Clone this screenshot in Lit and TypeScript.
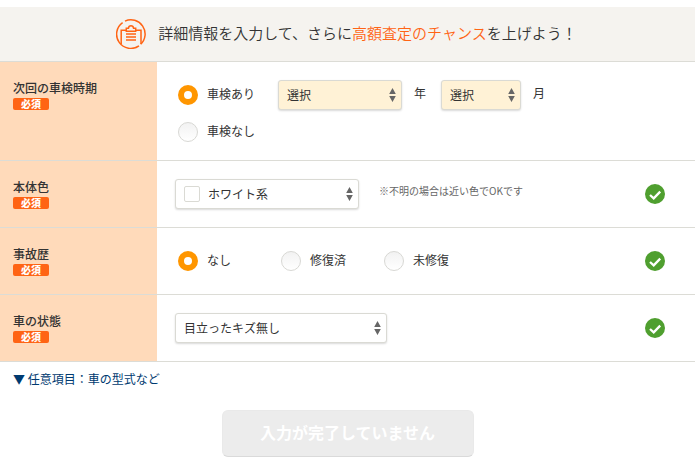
import { LitElement, html, css, nothing, type TemplateResult } from "lit";
import { customElement, property } from "lit/decorators.js";

const arrows = html`<svg class="arrows" viewBox="0 0 7 14" width="7" height="14" aria-hidden="true">
  <path d="M3.5 0L6.8 6H.2z M3.5 14L.2 8H6.8z" fill="#666" />
</svg>`;

const checkMark = html`<svg class="done" viewBox="0 0 20 20" width="20" height="20" role="img" aria-label="OK">
  <circle cx="10" cy="10" r="10" fill="#4f9f2f" />
  <path d="M5 11L8.7 14.4L15.2 7.6" fill="none" stroke="#fff" stroke-width="2.3" />
</svg>`;

const clipboard = html`<svg class="clipboard" viewBox="0 0 30 30" width="30" height="30" aria-hidden="true">
  <g fill="none" stroke="#ff6414" stroke-width="1.5">
    <path d="M9 2.1A14.2 14.2 0 0 1 24.7 25.3" />
    <path d="M23 26.8A14.2 14.2 0 0 1 6.6 3.6" />
    <path d="M10 11.2H5.2V25M20 11.2H25V25" />
    <path d="M10.3 12.2V9.3H12.4C12.8 5.9 17.2 5.9 17.6 9.3H19.7V12.2Z" />
    <path d="M10 15H20M10 18H20M10 21H20" />
  </g>
</svg>`;

@customElement("form-row")
class FormRow extends LitElement {
  @property() heading = "";
  @property({ type: Boolean }) complete = false;

  static styles = css`
    :host {
      display: flex;
      border-bottom: 1px solid #dcdcd6;
    }
    .head {
      box-sizing: border-box;
      flex: none;
      width: 157px;
      padding: 17px 13px 0;
      background: #ffdaba;
      font-weight: 500;
      line-height: 18px;
    }
    .must {
      display: block;
      width: 36px;
      height: 12px;
      margin-top: 1px;
      border-radius: 2px;
      background: #ff6414;
      color: #fff;
      font-size: 10px;
      font-weight: 900;
      line-height: 12px;
      text-align: center;
    }
    .body {
      flex: 1;
      display: flex;
      align-items: center;
      min-height: 30px;
      padding: 18px 30px 18px 18px;
    }
    .fields {
      flex: 1;
    }
    .done {
      flex: none;
    }
  `;

  render() {
    return html`
      <div class="head">${this.heading}<span class="must">必須</span></div>
      <div class="body">
        <div class="fields"><slot></slot></div>
        ${this.complete ? checkMark : nothing}
      </div>
    `;
  }
}

@customElement("app-root")
class AppRoot extends LitElement {
  static styles = css`
    :host {
      display: block;
      padding-top: 7px;
      background: #fff;
      color: #333;
      font-family: "Noto Sans CJK JP", sans-serif;
      font-size: 12px;
      line-height: 18px;
    }
    .banner {
      display: flex;
      align-items: center;
      justify-content: center;
      gap: 12px;
      height: 54px;
      margin: 0;
      padding-right: 2px;
      border-bottom: 1px solid #dcdcd6;
      background: #f5f3ef;
      font-size: 15px;
      font-weight: 350;
      line-height: 22px;
    }
    .banner span {
      padding-bottom: 2px;
    }
    .banner em {
      color: #ff6414;
      font-style: normal;
    }
    .clipboard {
      flex: none;
    }
    .line {
      display: flex;
      align-items: center;
      min-height: 30px;
    }
    .line + .line {
      margin-top: 8px;
      min-height: 24px;
      align-items: flex-end;
    }
    .choice {
      display: flex;
      align-items: center;
      gap: 9px;
      width: 100px;
      padding-left: 3px;
    }
    .choice input {
      appearance: none;
      box-sizing: border-box;
      width: 20px;
      height: 20px;
      margin: 0;
      border: 1px solid #d8d8d4;
      border-radius: 50%;
      background: linear-gradient(#f2f2f2, #fff);
    }
    .choice input:checked {
      border: 6px solid #ff9600;
      background: #fff;
    }
    .choice span {
      padding-bottom: 2px;
    }
    .pick {
      position: relative;
      display: flex;
      align-items: center;
    }
    .pick select {
      appearance: none;
      box-sizing: border-box;
      width: 100%;
      height: 30px;
      padding: 0 20px 1px 8px;
      border: 1px solid #dadad4;
      border-radius: 3px;
      background: #fff;
      box-shadow: 0 1px 2px rgba(0, 0, 0, 0.15);
      color: inherit;
      font: inherit;
    }
    .pick.todo select {
      background: #fff2d6;
    }
    .pick .arrows {
      position: absolute;
      right: 6px;
      pointer-events: none;
    }
    .swatch {
      position: absolute;
      left: 9px;
      box-sizing: border-box;
      width: 16px;
      height: 16px;
      border: 1px solid #dadad4;
      border-radius: 2px;
      background: #fff;
      pointer-events: none;
    }
    .year {
      width: 124px;
    }
    .month {
      width: 80px;
    }
    .colour {
      width: 184px;
    }
    .pick.colour select {
      padding-left: 32px;
    }
    .state {
      width: 212px;
    }
    .unit {
      width: 12px;
      margin: 0 15px 0 12px;
      padding-bottom: 4px;
    }
    .note {
      margin-left: 20px;
      padding-bottom: 6px;
      color: #666;
      font-size: 10px;
    }
    .more {
      display: block;
      margin: 8px 13px 22px;
      color: #003a70;
      text-decoration: none;
    }
    .submit {
      display: block;
      width: 252px;
      height: 47px;
      margin: 0 auto;
      padding: 0 0 4px;
      border: 1px solid #e9e9e9;
      border-bottom-color: #dadada;
      border-radius: 6px;
      background: #ececec;
      color: #fff;
      font: 700 16px/24px "Noto Sans CJK JP", sans-serif;
    }
  `;

  private choice(name: string, text: string, checked = false): TemplateResult {
    return html`<label class="choice"
      ><input type="radio" name=${name} .checked=${checked} /><span>${text}</span></label
    >`;
  }

  private pick(kind: string, label: string, option: string, before: unknown = nothing): TemplateResult {
    return html`<div class="pick ${kind}">
      <select aria-label=${label}><option>${option}</option></select>${before}${arrows}
    </div>`;
  }

  render() {
    return html`
      <h1 class="banner">
        ${clipboard}
        <span>詳細情報を入力して、さらに<em>高額査定のチャンス</em>を上げよう！</span>
      </h1>
      <form>
        <form-row heading="次回の車検時期">
          <div class="line">
            ${this.choice("inspection", "車検あり", true)}
            ${this.pick("todo year", "年", "選択")}<span class="unit">年</span>
            ${this.pick("todo month", "月", "選択")}<span class="unit">月</span>
          </div>
          <div class="line">${this.choice("inspection", "車検なし")}</div>
        </form-row>
        <form-row heading="本体色" complete>
          <div class="line">
            ${this.pick("colour", "本体色", "ホワイト系", html`<span class="swatch"></span>`)}
            <span class="note">※不明の場合は近い色でOKです</span>
          </div>
        </form-row>
        <form-row heading="事故歴" complete>
          <div class="line">
            ${this.choice("accident", "なし", true)}${this.choice("accident", "修復済")}${this.choice("accident", "未修復")}
          </div>
        </form-row>
        <form-row heading="車の状態" complete>
          <div class="line">${this.pick("state", "車の状態", "目立ったキズ無し")}</div>
        </form-row>
        <a class="more" href="#">▼ 任意項目：車の型式など</a>
        <button class="submit" type="button">入力が完了していません</button>
      </form>
    `;
  }
}
